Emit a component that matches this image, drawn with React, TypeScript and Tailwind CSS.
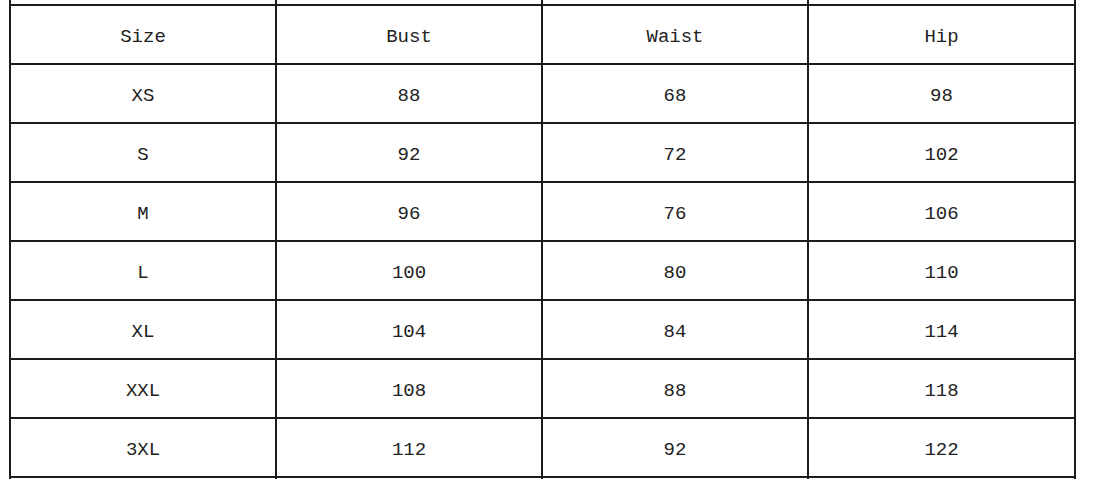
const header = ["Size", "Bust", "Waist", "Hip"];

const rows = [
  ["XS", "88", "68", "98"],
  ["S", "92", "72", "102"],
  ["M", "96", "76", "106"],
  ["L", "100", "80", "110"],
  ["XL", "104", "84", "114"],
  ["XXL", "108", "88", "118"],
  ["3XL", "112", "92", "122"],
];

const cols = "grid grid-cols-[266px_266px_266px_267px]";

function StubRow({ h }: { h: string }) {
  return (
    <div className={`${cols} ${h} border-l-2 border-[#1c1c1c]`}>
      {header.map((c) => (
        <div key={c} className="border-r-2 border-[#1c1c1c]" />
      ))}
    </div>
  );
}

function Row({ cells }: { cells: string[] }) {
  return (
    <div className={`${cols} h-[59px] border-l-2 border-[#1c1c1c]`}>
      {cells.map((c, i) => (
        <div
          key={i}
          className="flex items-center justify-center border-r-2 border-b-2 border-[#1c1c1c] pt-[5px] text-[19px] text-[#222]"
        >
          {c}
        </div>
      ))}
    </div>
  );
}

export default function App() {
  return (
    <div
      className="h-[479px] w-[1111px] overflow-hidden bg-white pl-[9px]"
      style={{ fontFamily: '"Liberation Mono", "DejaVu Sans Mono", monospace' }}
    >
      <StubRow h="h-[4px]" />
      <div className="border-t-2 border-[#1c1c1c] w-[1067px]">
        <Row cells={header} />
        {rows.map((r) => (
          <Row key={r[0]} cells={r} />
        ))}
      </div>
      <StubRow h="h-[10px]" />
    </div>
  );
}
